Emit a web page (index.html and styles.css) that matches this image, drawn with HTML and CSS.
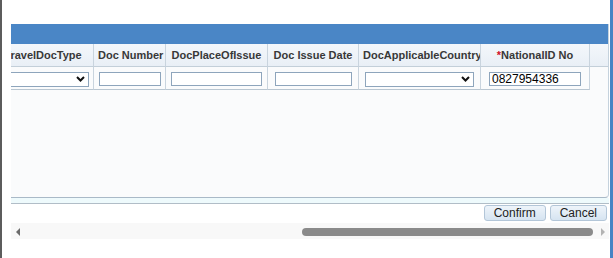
FILE: index.html
```html
<!DOCTYPE html>
<html>
<head>
    <title>Travel Documents</title>
    <link rel="stylesheet" href="styles.css">
</head>
<body>
    <div class="window">
        <div class="grid">
            <div class="grid-title"></div>
            <div class="grid-view">
                <div class="grid-rows">
                    <!-- header row -->
                    <div class="th">TravelDocType</div>
                    <div class="th">Doc Number</div>
                    <div class="th">DocPlaceOfIssue</div>
                    <div class="th">Doc Issue Date</div>
                    <div class="th th-left">DocApplicableCountry</div>
                    <div class="th"><span class="req">*</span>NationalID No</div>
                    <div class="th th-filler"></div>

                    <!-- data row -->
                    <div class="td">
                        <div class="combo combo-type">
                            <select></select>
                            <svg class="chev" width="9" height="6" viewBox="0 0 9 6"><path d="M1 1 L4.5 4.5 L8 1" fill="none" stroke="#111" stroke-width="2"/></svg>
                        </div>
                    </div>
                    <div class="td"><input class="doc-number" type="text"></div>
                    <div class="td"><input class="doc-place" type="text"></div>
                    <div class="td"><input class="doc-date" type="text"></div>
                    <div class="td">
                        <div class="combo combo-country">
                            <select></select>
                            <svg class="chev" width="9" height="6" viewBox="0 0 9 6"><path d="M1 1 L4.5 4.5 L8 1" fill="none" stroke="#111" stroke-width="2"/></svg>
                        </div>
                    </div>
                    <div class="td"><input class="national-id" type="text" value="0827954336"></div>
                    <div class="td td-filler"></div>
                </div>
            </div>
        </div>

        <div class="grid-foot"></div>

        <div class="actions">
            <button id="confirm">Confirm</button>
            <button id="cancel">Cancel</button>
        </div>

        <div class="hscroll">
            <span class="arrow-left"></span>
            <span class="track"></span>
            <span class="thumb"></span>
            <span class="arrow-right"></span>
        </div>
    </div>
</body>
</html>
```

FILE: styles.css
```css
 body {
     margin: 0;
     background-color: white;
     font-family: "Liberation Sans", Arial, sans-serif;
 }

 .window {
     height: 258px;
     box-sizing: border-box;
     border-left: 2px solid #5c5c5c;
     border-right: 3px solid #4884c4;
     padding: 24px 1px 0 9px;
 }

 .grid {
     height: 174px;
     box-sizing: border-box;
     background-color: #fafbfc;
     border-right: 1px solid #c5d2dd;
     border-bottom: 1px solid #a9b9c7;
     border-bottom-right-radius: 4px;
     overflow: hidden;
 }

 .grid-title {
     height: 20px;
     background-color: #4a86c6;
 }

 .grid-view {
     overflow: hidden;
 }

 /* table is scrolled to the right, so the first column is cut off */
 .grid-rows {
     display: grid;
     grid-template-columns: 101px 72px 102px 91px 122px 109px 19px;
     margin-left: -18px;
     width: 616px;
 }

 .th {
     height: 23px;
     box-sizing: border-box;
     line-height: 22px;
     padding: 0 4px;
     font-size: 11px;
     font-weight: bold;
     color: #383838;
     text-align: center;
     white-space: nowrap;
     overflow: hidden;
     background: linear-gradient(#f4f7fb, #e9eff6);
     border-right: 1px solid #c9d4de;
     border-bottom: 1px solid #c3cfd9;
 }

 .th-left {
     text-align: left;
     padding-right: 0;
 }

 .th-filler {
     border-right: none;
 }

 .req {
     color: #d0102a;
 }

 .td {
     height: 23px;
     box-sizing: border-box;
     display: flex;
     align-items: center;
     justify-content: center;
     padding-top: 1px;
     border-right: 1px solid #c9d4de;
     border-bottom: 1px solid #b9c6d1;
 }

 .td-filler {
     border: none;
 }

 input {
     height: 14px;
     box-sizing: border-box;
     border: 1px solid #8ea5bc;
     padding: 0 2px;
     margin: 0;
     font-family: "Liberation Sans", Arial, sans-serif;
     font-size: 12px;
     color: black;
     background: white;
 }

 .doc-number { width: 62px; }
 .doc-place { width: 91px; }
 .doc-date { width: 77px; }
 .national-id { width: 92px; }

 .combo {
     position: relative;
     height: 15px;
 }

 .combo select {
     appearance: none;
     width: 100%;
     height: 15px;
     box-sizing: border-box;
     border: 1px solid #8ea5bc;
     background: white;
     margin: 0;
     padding: 0;
 }

 .combo-type { width: 92px; }
 .combo-country { width: 109px; }

 .chev {
     position: absolute;
     right: 4px;
     top: 5px;
     pointer-events: none;
 }

 .grid-foot {
     height: 6px;
     box-sizing: border-box;
     background-color: #eefafc;
     border-bottom: 1px solid #b1bdc7;
 }

 .actions {
     display: flex;
     justify-content: flex-end;
     gap: 4px;
     padding: 1px 2px 0 0;
 }

 button {
     height: 16px;
     box-sizing: border-box;
     padding: 0 9px;
     font-family: "Liberation Sans", Arial, sans-serif;
     font-size: 12px;
     line-height: 13px;
     color: #222;
     background: linear-gradient(#eef4fa, #d6e4f1);
     border: 1px solid #b3c6d8;
     border-radius: 3px;
     cursor: pointer;
 }

 .hscroll {
     display: flex;
     align-items: center;
     height: 16px;
     margin-top: 2px;
     padding: 2px 4px 0 5px;
     box-sizing: border-box;
     background-color: #f8f8f8;
 }

 .arrow-left {
     width: 0;
     height: 0;
     border-top: 4px solid transparent;
     border-bottom: 4px solid transparent;
     border-right: 4px solid #6b6b6b;
 }

 .track {
     flex: 1;
 }

 .thumb {
     width: 291px;
     height: 8px;
     border-radius: 4px;
     background-color: #8a8a8a;
 }

 .arrow-right {
     width: 0;
     height: 0;
     margin-left: 8px;
     border-top: 4px solid transparent;
     border-bottom: 4px solid transparent;
     border-left: 4px solid #b3b3b3;
 }
```
